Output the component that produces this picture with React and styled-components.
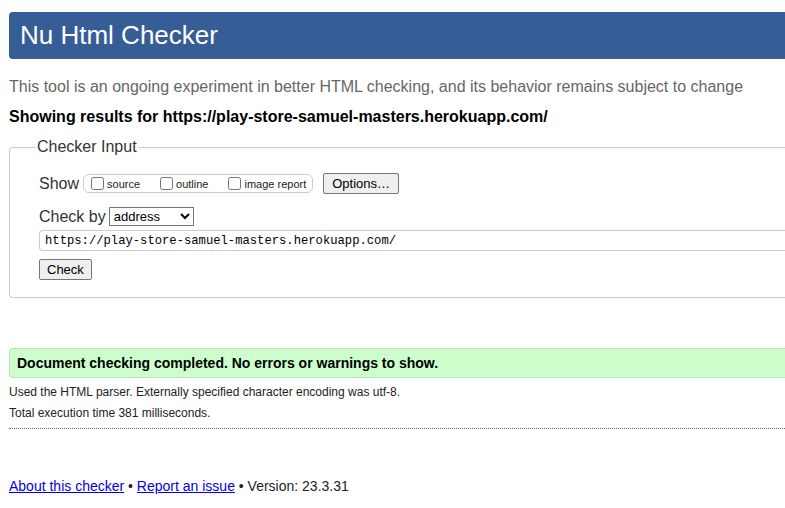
import styled, { createGlobalStyle } from "styled-components";

const GlobalStyle = createGlobalStyle`
  html, body {
    margin: 0;
    overflow: hidden;
    background: #fff;
  }
  body {
    font-family: "Liberation Sans", Arial, sans-serif;
    color: #000;
  }
`;

const Page = styled.div`
  width: 840px;
  padding: 12px 0 0 9px;
`;

const Header = styled.h1`
  margin: 0;
  height: 47px;
  display: flex;
  align-items: center;
  padding-left: 11px;
  background: #365d95;
  color: #fff;
  font-size: 26px;
  font-weight: normal;
  border-radius: 4px 0 0 4px;
`;

const Intro = styled.p`
  margin: 18px 0 0;
  color: #666;
  font-size: 16px;
  line-height: 20px;
`;

const Results = styled.p`
  margin: 10px 0 0;
  font-size: 16px;
  font-weight: bold;
  line-height: 20px;
`;

const Fieldset = styled.fieldset`
  margin: 11px 0 0;
  padding: 17px 29px 17px;
  border: 1px solid #ccc;
  border-right: none;
  border-radius: 4px 0 0 4px;
  height: 124px;
  box-sizing: content-box;
`;

const Legend = styled.legend`
  margin-left: -3px;
  padding: 0 1px;
  font-size: 16px;
  color: #333;
`;

const Row = styled.div`
  display: flex;
  align-items: center;
  font-size: 16px;
  color: #333;
  margin-bottom: ${(p) => p.$gap || 0}px;
`;

const CheckGroup = styled.div`
  display: flex;
  align-items: center;
  margin-left: 4px;
  height: 17px;
  padding: 0 6px 0 7px;
  border: 1px solid #ccc;
  border-radius: 6px;
  gap: 20px;
`;

const CheckLabel = styled.label`
  display: flex;
  align-items: center;
  font-size: 11px;
  color: #222;
`;

const Box = styled.input`
  margin: 0 3px 0 0;
  width: 13px;
  height: 13px;
`;

const Button = styled.button`
  font-family: "Liberation Sans", Arial, sans-serif;
  font-size: 13px;
  color: #000;
  background: #efefef;
  border: 1px solid #767676;
  border-radius: 2px;
  height: 21px;
  padding: 0 ${(p) => p.$px || 7}px;
  margin-left: ${(p) => p.$ml || 0}px;
`;

const Select = styled.select`
  font-family: "Liberation Sans", Arial, sans-serif;
  font-size: 13px;
  height: 19px;
  width: 85px;
  margin-left: 3px;
  border: 1px solid #767676;
  border-radius: 0;
  background: #fff;
  color: #000;
`;

const UrlInput = styled.input`
  display: block;
  width: 100%;
  box-sizing: border-box;
  height: 21px;
  margin: 4px 0 8px;
  padding: 0 5px;
  font-family: "Liberation Mono", "DejaVu Sans Mono", monospace;
  font-size: 12.2px;
  color: #000;
  border: 1px solid #ccc;
  border-right: none;
  border-radius: 4px 0 0 4px;
`;

const Success = styled.div`
  margin-top: 50px;
  height: 28px;
  display: flex;
  align-items: center;
  padding-left: 7px;
  background: #ccffcc;
  border: 1px solid #b9e5b9;
  border-right: none;
  border-radius: 4px 0 0 4px;
  font-size: 14px;
  font-weight: bold;
`;

const Info = styled.p`
  margin: ${(p) => p.$mt}px 0 0;
  font-size: 12px;
  line-height: 14px;
  color: #222;
`;

const Divider = styled.hr`
  margin: 8px 0 0;
  border: none;
  border-top: 1px dotted #666;
`;

const Footer = styled.p`
  margin: 49px 0 0;
  font-size: 14px;
  color: #222;
`;

const Link = styled.a`
  color: #0000ee;
  text-decoration: underline;
`;

export default function App() {
  return (
    <>
      <GlobalStyle />
      <Page>
        <Header>Nu Html Checker</Header>
        <Intro>
          This tool is an ongoing experiment in better HTML checking, and its
          behavior remains subject to change
        </Intro>
        <Results>
          Showing results for https://play-store-samuel-masters.herokuapp.com/
        </Results>
        <Fieldset>
          <Legend>Checker Input</Legend>
          <Row $gap={13}>
            Show
            <CheckGroup>
              <CheckLabel>
                <Box type="checkbox" />
                source
              </CheckLabel>
              <CheckLabel>
                <Box type="checkbox" />
                outline
              </CheckLabel>
              <CheckLabel>
                <Box type="checkbox" />
                image report
              </CheckLabel>
            </CheckGroup>
            <Button $ml={10} $px={8}>
              Options…
            </Button>
          </Row>
          <Row>
            Check by
            <Select defaultValue="address">
              <option value="address">address</option>
              <option value="file">file upload</option>
              <option value="text">text input</option>
            </Select>
          </Row>
          <UrlInput
            type="url"
            defaultValue="https://play-store-samuel-masters.herokuapp.com/"
          />
          <Button>Check</Button>
        </Fieldset>
        <Success>
          Document checking completed. No errors or warnings to show.
        </Success>
        <Info $mt={7}>
          Used the HTML parser. Externally specified character encoding was
          utf-8.
        </Info>
        <Info $mt={7}>Total execution time 381 milliseconds.</Info>
        <Divider />
        <Footer>
          <Link href="#">About this checker</Link> •{" "}
          <Link href="#">Report an issue</Link> • Version: 23.3.31
        </Footer>
      </Page>
    </>
  );
}
